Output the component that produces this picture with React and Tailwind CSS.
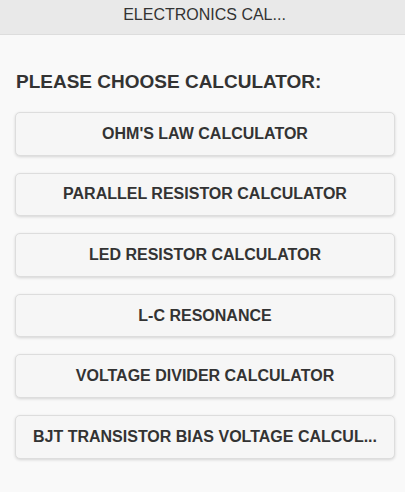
export default function App() {
  const items = [
    "OHM'S LAW CALCULATOR",
    "PARALLEL RESISTOR CALCULATOR",
    "LED RESISTOR CALCULATOR",
    "L-C RESONANCE",
    "VOLTAGE DIVIDER CALCULATOR",
    "BJT TRANSISTOR BIAS VOLTAGE CALCUL...",
  ];
  return (
    <div className="min-h-[492px] bg-[#f9f9f9] text-[#333]" style={{ fontFamily: '"Liberation Sans", Arial, sans-serif' }}>
      <div className="h-[35px] bg-[#e9e9e9] border-b border-[#dddddd] flex items-center justify-center pl-[4px]">
        <h1 className="text-[16px] font-normal leading-none text-[#333] pb-[4px]">ELECTRONICS CAL...</h1>
      </div>
      <div className="pl-[15px] pr-[10px] pt-[35px]">
        <h2 className="text-[19px] font-bold leading-[24px] pl-px text-[#333]">PLEASE CHOOSE CALCULATOR:</h2>
        <div className="mt-[18px] flex flex-col gap-[17px]">
          {items.map((t) => (
            <button
              key={t}
              className="h-[43.6px] w-full rounded-[5px] border border-[#dddddd] bg-[#f6f6f6] px-[14px] text-[16px] font-bold text-[#333] shadow-[0_1px_3px_rgba(0,0,0,0.15)] whitespace-nowrap overflow-hidden text-center"
            >
              {t}
            </button>
          ))}
        </div>
      </div>
    </div>
  );
}
